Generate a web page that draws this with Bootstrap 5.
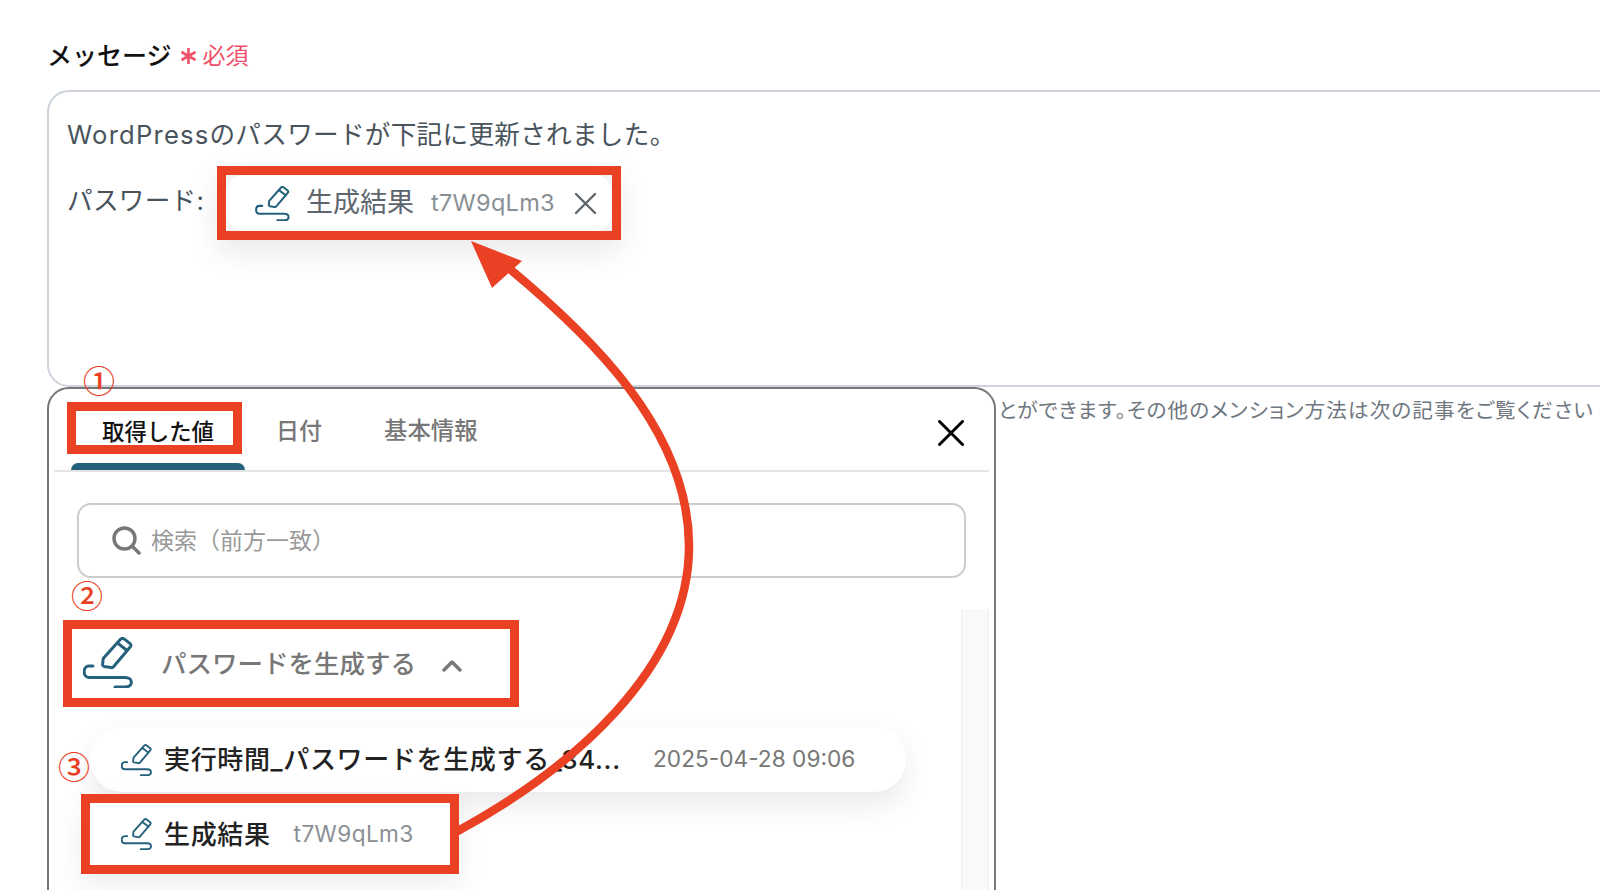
<!DOCTYPE html>
<html lang="ja">
<head>
  <meta charset="UTF-8" />
  <meta name="viewport" content="width=device-width, initial-scale=1.0"/>
  <title>メッセージ</title>
  <link href="https://cdn.jsdelivr.net/npm/bootstrap@5.3.2/dist/css/bootstrap.min.css" rel="stylesheet"/>
  <style>
    html, body { height: 100%; }
    body {
      background: #fff;
      font-family: Inter, "Noto Sans CJK JP", sans-serif;
      margin: 0;
      overflow: hidden;
    }

    .stage { width: 1600px; height: 890px; overflow: hidden; }

    .msg-label { margin: 39px 0 17px 47px; height: 34px; line-height: 34px; }
    .msg-title { font-size: 25px; font-weight: 500; color: #111; }
    .msg-req { color: #f0506a; font-size: 23px; margin-left: 8px; }
    .msg-star { margin-right: 6px; }

    .msg-box {
      margin-left: 47px;
      width: 1600px;
      height: 297px;
      border: 2px solid #ccd3da;
      border-radius: 22px;
      padding: 25px 18px;
      color: #49535c;
      font-size: 25.6px;
      line-height: 36px;
      letter-spacing: .3px;
    }
    .msg-latin { letter-spacing: 1.2px; }
    .msg-pw-row { margin-top: 13px; }
    .msg-pw-label { width: 150px; padding-bottom: 5px; white-space: nowrap; }

    .red-box { border: 9px solid #ea4024; background: #fff; }
    .pw-anno { width: 404px; height: 74px; background: #f4f4f4; box-shadow: 0 12px 30px rgba(0,0,0,.09); letter-spacing: 0; }
    .pw-chip { background: #fff; border-radius: 18px; height: 100%; padding-left: 29px; color: #5d666e; }
    .pw-chip .chip-name { font-size: 27px; margin-left: 16px; }
    .pw-chip .chip-val { font-size: 23.5px; margin-left: 17px; letter-spacing: .3px; color: #8a8f94; }
    .pw-chip .chip-x { margin-left: 19px; }

    .picker {
      width: 949px;
      height: 560px;
      border: 2px solid #777;
      border-radius: 22px;
      background: #fff;
      margin-left: 47px;
    }
    .side-note { margin: 9px 0 0 2px; font-size: 20.6px; line-height: 30px; color: #6f7780; white-space: nowrap; font-feature-settings: "palt"; letter-spacing: 1.1px; }

    .picker-head { margin: 0 5px; padding-top: 13px; border-bottom: 2px solid #e5e5e5; height: 83px; }
    .tab-first { margin-left: 13px; }
    .tab-anno { width: 175px; height: 52px; padding: 5px 0 0 26px; font-size: 22.4px; line-height: 32px; font-weight: 500; color: #111; }
    .tab-bar { width: 174px; height: 7px; margin: 9px 0 0 4px; background: #25617d; border-radius: 8px 8px 0 0; }
    .tab-item { font-size: 23px; line-height: 58px; font-weight: 500; color: #777; }
    .tab-date { margin-left: 31px; }
    .tab-info { margin-left: 62px; font-size: 23.4px; }
    .picker-close { margin: 18px 25px 0 auto; }

    .picker-search {
      margin: 31px 0 0 28px;
      width: 889px;
      height: 75px;
      border: 2px solid #ccc;
      border-radius: 14px;
      padding-left: 33px;
      color: #999;
      font-size: 23px;
    }
    .picker-search span { margin-left: 10px; padding-top: 2px; }

    .picker-body { margin-top: 30px; }
    .picker-list { flex: 1; padding-top: 12px; }
    .picker-scroll { width: 28px; height: 320px; margin: 1px 5px 0 0; background: #f9f9f9; border-left: 1px solid #eee; border-right: 1px solid #eee; }

    .group-anno { width: 456px; height: 87px; margin-left: 14px; padding: 0 0 2px 11px; }
    .group-name { font-size: 25.5px; font-weight: 500; color: #777; margin-left: 28px; padding-top: 3px; }
    .group-chev { margin: 6px 0 0 26px; }

    .val-row { width: 816px; height: 65px; margin: 20px 0 0 41px; padding-left: 31px; border-radius: 32px; background: #fff; box-shadow: 0 12px 30px rgba(0,0,0,.09); }
    .val-name { font-size: 26px; font-weight: 500; color: #222; margin-left: 12px; letter-spacing: .65px; }
    .val-clip { width: 458px; white-space: nowrap; overflow: hidden; }
    .val-date { font-size: 22.7px; color: #777; margin-left: 31px; }

    .val-anno { width: 378px; height: 80px; margin: 2px 0 0 32px; box-shadow: 0 12px 30px rgba(0,0,0,.07); }
    .val-chip { height: 100%; padding-left: 31px; border-radius: 30px 0 0 30px; background: #fff; }
    .val-data { font-size: 22.6px; color: #8a8f94; margin-left: 23px; letter-spacing: .4px; }

    .step-mark { color: #ea4024; font-size: 32px; line-height: 32px; font-weight: 500; font-family: "Noto Sans CJK JP", sans-serif; }
    .step-1 { left: 83px; top: 363px; }
    .step-2 { left: 71px; top: 578px; }
    .step-3 { left: 58px; top: 749px; }
    .arrow-layer { left: 0; top: 0; pointer-events: none; }
  </style>
</head>
<body>
  <svg width="0" height="0" class="position-absolute">
    <symbol id="pen-ico" viewBox="0 0 50 51">
      <g fill="none" stroke="#25617d" stroke-width="3" stroke-linecap="round" stroke-linejoin="round">
        <path d="M37.5 2.2 Q39.5 .6 41.5 2.2 L47 6.6 Q48.8 8.2 47.2 10 L30.5 29.8 Q29.5 31 28 30.6 L21 29.4 Q19.4 29 19.6 27.4 L20.2 21.6 Z"/>
        <path d="M34.5 6 L44 13.5"/>
        <path d="M10 29 H6 C-.5 29 -.5 40.5 6 40.5 H42 C50.5 40.5 50.5 50 42 50 H32"/>
      </g>
    </symbol>
  </svg>

  <div class="stage position-relative">
    <div class="msg-label d-flex align-items-center">
      <span class="msg-title">メッセージ</span>
      <span class="msg-req d-flex align-items-center">
        <svg class="msg-star" width="17" height="18" viewBox="0 0 17 18"><path d="M8.5 1 V17 M1.5 5 L15.5 13 M15.5 5 L1.5 13" stroke="#f0506a" stroke-width="2.6" fill="none"/></svg>
        必須
      </span>
    </div>

    <div class="msg-box">
      <div><span class="msg-latin">WordPress</span>のパスワードが下記に更新されました。</div>
      <div class="msg-pw-row d-flex align-items-center">
        <div class="msg-pw-label">パスワード:</div>
        <div class="red-box pw-anno">
          <div class="pw-chip d-flex align-items-center">
            <svg width="35" height="35"><use href="#pen-ico"/></svg>
            <span class="chip-name">生成結果</span>
            <span class="chip-val">t7W9qLm3</span>
            <svg class="chip-x" width="23" height="23" viewBox="0 0 23 23"><path d="M2 2 L21 21 M21 2 L2 21" stroke="#5d666e" stroke-width="2.4" stroke-linecap="round" fill="none"/></svg>
          </div>
        </div>
      </div>
    </div>

    <div class="d-flex align-items-start">
      <div class="picker flex-shrink-0">
        <div class="picker-head d-flex align-items-start">
          <div class="tab-first">
            <div class="red-box tab-anno">取得した値</div>
            <div class="tab-bar"></div>
          </div>
          <div class="tab-item tab-date">日付</div>
          <div class="tab-item tab-info">基本情報</div>
          <svg class="picker-close" width="26" height="26" viewBox="0 0 26 26"><path d="M1.5 1.5 L24.5 24.5 M24.5 1.5 L1.5 24.5" stroke="#000" stroke-width="3" stroke-linecap="round" fill="none"/></svg>
        </div>

        <div class="picker-search d-flex align-items-center">
          <svg width="29" height="29" viewBox="0 0 29 29"><circle cx="12.5" cy="12.5" r="10.5" fill="none" stroke="#777" stroke-width="3.4"/><path d="M20.5 20.5 L27 27" stroke="#777" stroke-width="3.4" stroke-linecap="round"/></svg>
          <span>検索（前方一致）</span>
        </div>

        <div class="picker-body d-flex">
          <div class="picker-list">
            <div class="red-box group-anno d-flex align-items-center">
              <svg width="50" height="51"><use href="#pen-ico"/></svg>
              <span class="group-name">パスワードを生成する</span>
              <svg class="group-chev" width="20" height="13" viewBox="0 0 20 13"><path d="M2 11 L10 3 L18 11" stroke="#777" stroke-width="3.4" stroke-linecap="round" stroke-linejoin="round" fill="none"/></svg>
            </div>

            <div class="val-row d-flex align-items-center">
              <svg width="31" height="32"><use href="#pen-ico"/></svg>
              <div class="val-name val-clip">実行時間_パスワードを生成する_34...</div>
              <span class="val-date">2025-04-28 09:06</span>
            </div>

            <div class="red-box val-anno">
              <div class="val-chip d-flex align-items-center">
                <svg width="31" height="32"><use href="#pen-ico"/></svg>
                <span class="val-name">生成結果</span>
                <span class="val-data">t7W9qLm3</span>
              </div>
            </div>
          </div>
          <div class="picker-scroll"></div>
        </div>
      </div>
      <div class="side-note">とができます。その他のメンション方法は次の記事をご覧ください</div>
    </div>

    <div class="step-mark step-1 position-absolute">①</div>
    <div class="step-mark step-2 position-absolute">②</div>
    <div class="step-mark step-3 position-absolute">③</div>

    <svg class="arrow-layer position-absolute" width="1600" height="890" viewBox="0 0 1600 890">
      <path d="M456 832 C 570 770, 689 670, 689 546 C 689 430, 590 335, 505 265" fill="none" stroke="#ea4024" stroke-width="8.5"/>
      <path d="M471 241 L522 261 L492 288 Z" fill="#ea4024"/>
    </svg>
  </div>
</body>
</html>
